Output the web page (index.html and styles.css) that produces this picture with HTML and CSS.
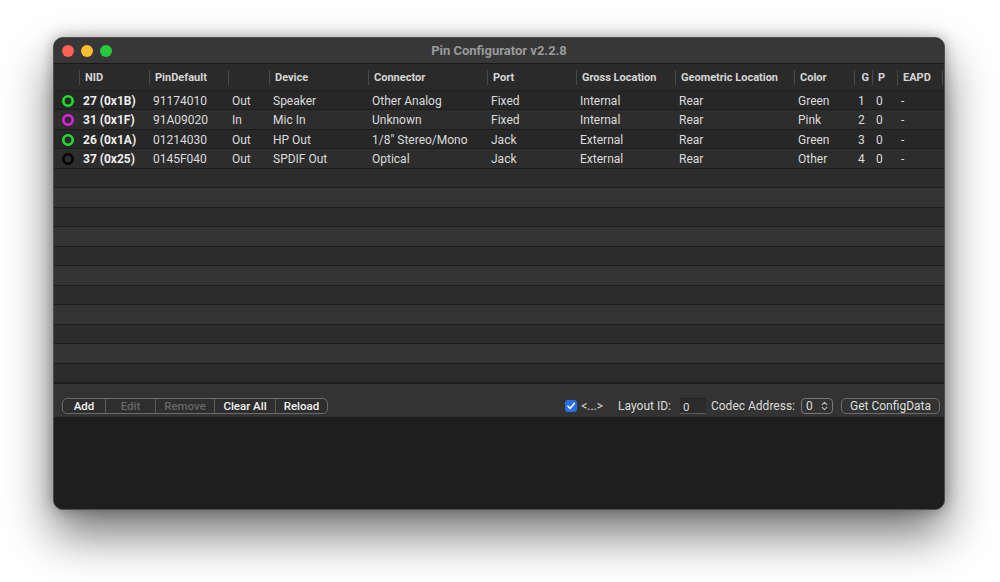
FILE: index.html
```html
<!doctype html>
<html lang="en-US">
  <head>
    <meta charset="utf-8" />
    <title>Pin Configurator</title>
    <link rel="stylesheet" href="styles.css">
  </head>
  <body>
    <div class="window">
      <div class="titlebar">
        <div class="lights">
          <span class="light red"></span>
          <span class="light yellow"></span>
          <span class="light green"></span>
        </div>
        <div class="title">Pin Configurator v2.2.8</div>
        <div></div>
      </div>

      <div class="table">
        <div class="row head">
          <div></div>
          <div><span>NID</span></div>
          <div><span>PinDefault</span></div>
          <div><span></span></div>
          <div><span>Device</span></div>
          <div><span>Connector</span></div>
          <div><span>Port</span></div>
          <div><span>Gross Location</span></div>
          <div><span>Geometric Location</span></div>
          <div><span>Color</span></div>
          <div><span class="right">G</span></div>
          <div><span>P</span></div>
          <div><span>EAPD</span></div>
          <div><span></span></div>
        </div>

        <div class="rows">
          <div class="row">
            <div class="dot"><svg class="ring" viewBox="0 0 12 12"><circle cx="6" cy="6" r="4.7" stroke="#1ee02a" /></svg></div>
            <div class="nid">27 (0x1B)</div>
            <div>91174010</div>
            <div>Out</div>
            <div>Speaker</div>
            <div>Other Analog</div>
            <div>Fixed</div>
            <div>Internal</div>
            <div>Rear</div>
            <div>Green</div>
            <div>1</div>
            <div>0</div>
            <div>-</div>
            <div></div>
          </div>
          <div class="row">
            <div class="dot"><svg class="ring" viewBox="0 0 12 12"><circle cx="6" cy="6" r="4.7" stroke="#e61ee6" /></svg></div>
            <div class="nid">31 (0x1F)</div>
            <div>91A09020</div>
            <div>In</div>
            <div>Mic In</div>
            <div>Unknown</div>
            <div>Fixed</div>
            <div>Internal</div>
            <div>Rear</div>
            <div>Pink</div>
            <div>2</div>
            <div>0</div>
            <div>-</div>
            <div></div>
          </div>
          <div class="row">
            <div class="dot"><svg class="ring" viewBox="0 0 12 12"><circle cx="6" cy="6" r="4.7" stroke="#1ee02a" /></svg></div>
            <div class="nid">26 (0x1A)</div>
            <div>01214030</div>
            <div>Out</div>
            <div>HP Out</div>
            <div>1/8" Stereo/Mono</div>
            <div>Jack</div>
            <div>External</div>
            <div>Rear</div>
            <div>Green</div>
            <div>3</div>
            <div>0</div>
            <div>-</div>
            <div></div>
          </div>
          <div class="row">
            <div class="dot"><svg class="ring" viewBox="0 0 12 12"><circle cx="6" cy="6" r="4.7" stroke="#000" /></svg></div>
            <div class="nid">37 (0x25)</div>
            <div>0145F040</div>
            <div>Out</div>
            <div>SPDIF Out</div>
            <div>Optical</div>
            <div>Jack</div>
            <div>External</div>
            <div>Rear</div>
            <div>Other</div>
            <div>4</div>
            <div>0</div>
            <div>-</div>
            <div></div>
          </div>
          <div class="row empty"></div>
          <div class="row empty"></div>
          <div class="row empty"></div>
          <div class="row empty"></div>
          <div class="row empty"></div>
          <div class="row empty"></div>
          <div class="row empty"></div>
          <div class="row empty"></div>
          <div class="row empty"></div>
          <div class="row empty"></div>
          <div class="row empty"></div>
        </div>
      </div>

      <div class="toolbar">
        <div class="segmented">
          <button class="seg seg-add">Add</button>
          <button class="seg seg-edit" disabled>Edit</button>
          <button class="seg seg-remove" disabled>Remove</button>
          <button class="seg seg-clear">Clear All</button>
          <button class="seg seg-reload">Reload</button>
        </div>

        <div class="controls">
          <label class="check">
            <span class="box">
              <svg width="10" height="10" viewBox="0 0 10 10">
                <path d="M2 5.2 L4.1 7.4 L8.2 2.4" fill="none" stroke="#fff" stroke-width="1.6" stroke-linecap="round" stroke-linejoin="round" />
              </svg>
            </span>
            <span>&lt;...&gt;</span>
          </label>
          <span class="label layout-label">Layout ID:</span>
          <span class="field">0</span>
          <span class="label">Codec Address:</span>
          <span class="popup">
            <span>0</span>
            <svg width="7" height="10" viewBox="0 0 7 10">
              <path d="M1.2 3.6 L3.5 1.4 L5.8 3.6 M1.2 6.4 L3.5 8.6 L5.8 6.4" fill="none" stroke="#bbb" stroke-width="1.1" stroke-linecap="round" stroke-linejoin="round" />
            </svg>
          </span>
          <button class="push">Get ConfigData</button>
        </div>
      </div>

      <div class="log"></div>
    </div>
  </body>
</html>
```

FILE: styles.css
```css
* {
  box-sizing: border-box;
  margin: 0;
  padding: 0;
}

html,
body {
  background: #fff;
}

body {
  min-height: 582px;
  padding: 37px 0 0 53px;
  font-family: Roboto, "Liberation Sans", Arial, sans-serif;
  color: #dcdcdc;
}

.window {
  width: 892px;
  height: 473px;
  background: #1e1e1e;
  border: 1px solid #4f4f4f;
  border-radius: 10px;
  overflow: hidden;
  display: flex;
  flex-direction: column;
  box-shadow: 0 24px 48px rgba(0, 0, 0, 0.55), 0 0 14px rgba(0, 0, 0, 0.3);
}

/* title bar */
.titlebar {
  height: 26px;
  flex: none;
  background: #373737;
  border-bottom: 1px solid #191919;
  display: grid;
  grid-template-columns: 1fr auto 1fr;
  align-items: center;
}

.lights {
  display: flex;
  gap: 7px;
  padding-left: 8px;
}

.light {
  width: 12px;
  height: 12px;
  border-radius: 50%;
}

.red { background: #fe5f57; }
.yellow { background: #febc2e; }
.green { background: #28c840; }

.title {
  font-size: 13px;
  font-weight: 700;
  color: #9a9a9a;
}

/* table */
.table {
  flex: none;
}

.row {
  display: grid;
  grid-template-columns: 25px 70px 79px 41px 99px 119px 89px 99px 119px 60px 18px 25px 45px 1fr;
  height: 19.47px;
  align-items: center;
  font-size: 12px;
  white-space: nowrap;
  border-bottom: 1px solid #1c1c1c;
}

.row > div {
  padding: 1px 0 0 4px;
  overflow: hidden;
}

.row.head {
  height: 27px;
  background: #2a2a2a;
  font-size: 11px;
  font-weight: 700;
  color: #d6d6d6;
  border-bottom: 1px solid #202020;
}

.row.head > div {
  padding: 1px 0 0 0;
}

.row.head span {
  display: block;
  height: 15px;
  line-height: 15px;
  border-left: 1px solid #4a4a4a;
  padding-left: 5px;
}

.row.head .right {
  text-align: right;
  padding-right: 3px;
}

.row.head > div:first-child span {
  border-left: 0;
}

.rows {
  height: 292px;
  overflow: hidden;
  background: #2c2c2c;
}

.rows .row:nth-child(odd) {
  background: #272727;
}

.rows .row:nth-child(even) {
  background: #2d2d2d;
}

.rows .row.empty:nth-child(odd) {
  background: #2c2c2c;
}

.rows .row.empty:nth-child(even) {
  background: #343434;
}

.row .dot {
  padding: 1px 0 0 8px;
  display: flex;
  align-items: center;
}

.ring {
  display: block;
  width: 12px;
  height: 12px;
  fill: none;
  stroke-width: 2.6;
}

.row .nid {
  font-weight: 700;
  color: #f0f0f0;
}

/* toolbar */
.toolbar {
  height: 34px;
  flex: none;
  background: #333;
  border-top: 1px solid #1c1c1c;
  display: flex;
  justify-content: space-between;
  align-items: flex-start;
  padding: 14px 4px 0 8px;
  font-size: 12px;
}

.segmented {
  display: flex;
  height: 16px;
  border: 1px solid #6a6a6a;
  border-radius: 5px;
  overflow: hidden;
  background: #2e2e2e;
}

.seg {
  font-family: inherit;
  font-size: 11.5px;
  font-weight: 500;
  color: #f2f2f2;
  background: none;
  border: 0;
  border-left: 1px solid #5a5a5a;
  line-height: 14px;
  text-align: center;
}

.seg:first-child {
  border-left: 0;
}

.seg:disabled {
  color: #666;
}

.seg-add { width: 42px; }
.seg-edit { width: 50px; }
.seg-remove { width: 59px; }
.seg-clear { width: 61px; }
.seg-reload { width: 52px; }

.controls {
  display: flex;
  align-items: center;
  height: 16px;
  color: #dcdcdc;
}

.check {
  display: flex;
  align-items: center;
  gap: 4px;
  font-size: 12px;
}

.box {
  width: 12px;
  height: 12px;
  border-radius: 3px;
  background: #2a6ee6;
  display: flex;
  align-items: center;
  justify-content: center;
}

.label {
  margin-left: 5px;
}

.layout-label {
  margin-left: 15px;
}

.field {
  width: 26px;
  height: 16px;
  margin: 0 0 0 9px;
  background: #2b2b2b;
  border-bottom: 1px solid #5c5c5c;
  border-top: 1px solid #262626;
  padding: 2px 0 0 3px;
  line-height: 13px;
  font-size: 11.5px;
}

.popup {
  display: flex;
  align-items: center;
  justify-content: space-between;
  width: 32px;
  height: 16px;
  margin-left: 6px;
  padding: 0 4px 0 4px;
  border: 1px solid #777;
  border-radius: 4px;
}

.push {
  margin-left: 8px;
  width: 99px;
  height: 16px;
  font-family: inherit;
  font-size: 12px;
  color: #dedede;
  background: #333;
  border: 1px solid #6a6a6a;
  border-radius: 5px;
}

.log {
  flex: 1;
  background: #1e1e1e;
}
```
